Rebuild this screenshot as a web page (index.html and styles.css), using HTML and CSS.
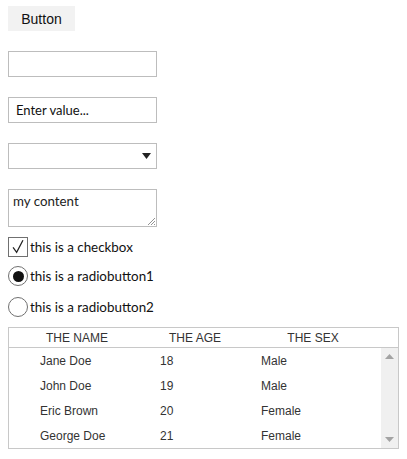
FILE: index.html
```html
<!DOCTYPE html>
<html>
<head>
<meta charset="utf-8">
<link rel="stylesheet" href="styles.css">
</head>
<body>
<div class="page">
  <div class="btn">Button</div>
  <div class="field"></div>
  <div class="field"><span class="ph">Enter value...</span></div>
  <div class="field select">
    <svg class="arrow" width="9" height="6" viewBox="0 0 9 6"><path d="M0 0H9L4.5 6Z" fill="#222"/></svg>
  </div>
  <div class="field area">
    <span class="content">my content</span>
    <svg class="grip" width="8" height="8" viewBox="0 0 8 8"><path d="M1 8L8 1M4 8L8 4M7 8L8 7" stroke="#777" stroke-width="0.8" fill="none"/></svg>
  </div>
  <div class="opt check-row">
    <span class="box"><svg width="20" height="20" viewBox="0 0 20 20"><path d="M4.5 10.5L8.5 16L15.5 2.5" stroke="#222" stroke-width="1.4" fill="none"/></svg></span>
    <span class="lbl">this is a checkbox</span>
  </div>
  <div class="opt r1">
    <span class="radio on"><span class="dot"></span></span>
    <span class="lbl">this is a radiobutton1</span>
  </div>
  <div class="opt r2">
    <span class="radio"></span>
    <span class="lbl">this is a radiobutton2</span>
  </div>
  <div class="table">
    <div class="thead">
      <span class="h h1">THE NAME</span>
      <span class="h h2">THE AGE</span>
      <span class="h h3">THE SEX</span>
    </div>
    <div class="tbody">
      <div class="rows">
        <div class="row"><span class="c1">Jane Doe</span><span class="c2">18</span><span class="c3">Male</span></div>
        <div class="row"><span class="c1">John Doe</span><span class="c2">19</span><span class="c3">Male</span></div>
        <div class="row"><span class="c1">Eric Brown</span><span class="c2">20</span><span class="c3">Female</span></div>
        <div class="row"><span class="c1">George Doe</span><span class="c2">21</span><span class="c3">Female</span></div>
      </div>
      <div class="scroll">
        <svg width="9" height="5" viewBox="0 0 9 5"><path d="M0 5H9L4.5 0Z" fill="#a3a3a3"/></svg>
        <svg width="9" height="5" viewBox="0 0 9 5"><path d="M0 0H9L4.5 5Z" fill="#a3a3a3"/></svg>
      </div>
    </div>
  </div>
</div>
</body>
</html>
```
FILE: styles.css
```css
html, body { margin: 0; padding: 0; background: #fff; }
.page {
  padding: 6px 8px 0 8px;
  display: flex;
  flex-direction: column;
  align-items: flex-start;
  font-family: Lato, "Noto Sans", sans-serif;
  color: #000;
}
.btn {
  width: 67px;
  height: 25px;
  background: #f2f2f2;
  font-family: "Liberation Sans", Arial, sans-serif;
  font-size: 14px;
  color: #111;
  display: flex;
  align-items: center;
  justify-content: center;
  margin-bottom: 20px;
}
.field {
  box-sizing: border-box;
  width: 149px;
  height: 26px;
  border: 1px solid #bdbdbd;
  margin-bottom: 20px;
  display: flex;
  align-items: center;
  position: relative;
}
.ph { font-size: 13px; padding-left: 7px; color: #111; }
.select { justify-content: flex-end; }
.arrow { margin-right: 5px; }
.area { height: 38px; align-items: flex-start; margin-bottom: 10px; }
.content { font-size: 13.3px; padding-left: 4px; padding-top: 2px; color: #222; line-height: 18px; }
.grip { position: absolute; right: 1px; bottom: 1px; }
.opt {
  display: flex;
  align-items: center;
  height: 20px;
  font-size: 13.4px;
}
.check-row { margin-bottom: 9px; }
.r1 { margin-bottom: 11px; }
.r2 { margin-bottom: 10px; }
.box {
  box-sizing: border-box;
  width: 20px;
  height: 20px;
  border: 1px solid #707070;
  display: flex;
  align-items: center;
  justify-content: center;
}
.box svg { display: block; }
.radio {
  box-sizing: border-box;
  width: 20px;
  height: 20px;
  border: 1px solid #707070;
  border-radius: 50%;
  display: flex;
  align-items: center;
  justify-content: center;
}
.dot { width: 11px; height: 11px; border-radius: 50%; background: #111; }
.lbl { margin-left: 2px; line-height: 20px; color: #111; }
.table {
  box-sizing: border-box;
  width: 391px;
  height: 122px;
  border: 1px solid #c8c8c8;
  font-family: "Liberation Sans", Arial, sans-serif;
  font-size: 12px;
  color: #333;
  display: flex;
  flex-direction: column;
}
.thead {
  box-sizing: border-box;
  height: 21px;
  border-bottom: 1px solid #c8c8c8;
  display: grid;
  grid-template-columns: 9px 118px 118px 118px;
  align-items: center;
}
.h { text-align: center; }
.h1 { grid-column: 2; }
.h2 { grid-column: 3; }
.h3 { grid-column: 4; }
.tbody { flex: 1; display: flex; }
.rows { flex: 1; padding-top: 0; }
.row {
  height: 25px;
  display: grid;
  grid-template-columns: 31px 120px 101px 1fr;
  align-items: center;
}
.c1 { grid-column: 2; }
.c2 { grid-column: 3; }
.c3 { grid-column: 4; }
.scroll {
  width: 17px;
  background: #f0f0f0;
  display: flex;
  flex-direction: column;
  justify-content: space-between;
  align-items: center;
  padding: 6px 0 6px 0;
}
.scroll svg { display: block; }
```
